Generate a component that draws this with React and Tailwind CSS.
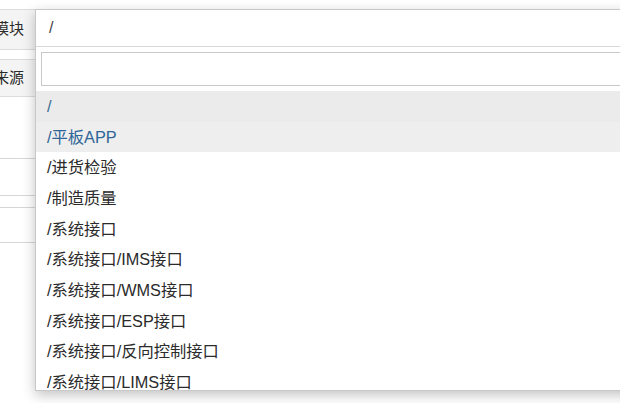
const OPTIONS = [
  "/",
  "/平板APP",
  "/进货检验",
  "/制造质量",
  "/系统接口",
  "/系统接口/IMS接口",
  "/系统接口/WMS接口",
  "/系统接口/ESP接口",
  "/系统接口/反向控制接口",
  "/系统接口/LIMS接口",
];

const FONT = { fontFamily: '"Liberation Sans", "Noto Sans CJK SC", sans-serif' };

export default function App() {
  return (
    <div
      className="relative w-[620px] h-[403px] overflow-hidden bg-white text-[#2b2b2b]"
      style={FONT}
    >
      {/* form behind the dropdown */}
      <div className="pt-[9px] w-[35px] flex flex-col">
        <div className="h-[41px] border-t border-b border-[#dcdcdc] bg-[#f4f4f4] flex items-center justify-end pr-[11px] text-[15px] whitespace-nowrap">
          模块
        </div>
        <div className="h-[9px]" />
        <div className="h-[38px] border-t border-b border-[#dcdcdc] bg-[#f4f4f4] flex items-center justify-end pr-[11px] text-[15px] whitespace-nowrap">
          来源
        </div>
        <div className="h-[62px] border-b border-[#d6d6d6]" />
        <div className="h-[37px] border-b border-[#d6d6d6]" />
        <div className="h-[12px] border-b border-[#d6d6d6]" />
        <div className="h-[35px] border-b border-[#d6d6d6]" />
      </div>

      {/* select + open dropdown */}
      <div className="absolute left-[35px] top-[9px] w-[600px] h-[382px] bg-white border-l border-t border-b border-[#c8c8c8] shadow-[0_4px_12px_rgba(0,0,0,0.24)] overflow-hidden">
        <div className="h-[37px] border-b border-[#d8d8d8] flex items-center pl-[13px] text-[16px] text-[#444]">
          /
        </div>
        <div className="pt-[5px] pb-[5px] pl-[5px]">
          <div className="h-[34px] border border-[#c8c8c8] bg-white" />
        </div>
        <ul className="flex flex-col">
          {OPTIONS.map((o, i) => (
            <li
              key={o}
              className={`h-[30.67px] shrink-0 flex items-center pl-[11px] text-[16.3px] whitespace-nowrap ${
                i === 0
                  ? "bg-[#ebebeb] text-[#3b6a94]"
                  : i === 1
                  ? "bg-[#eeeeee] text-[#2f6597]"
                  : "text-[#2b2b2b]"
              }`}
            >
              {o}
            </li>
          ))}
        </ul>
      </div>
    </div>
  );
}
